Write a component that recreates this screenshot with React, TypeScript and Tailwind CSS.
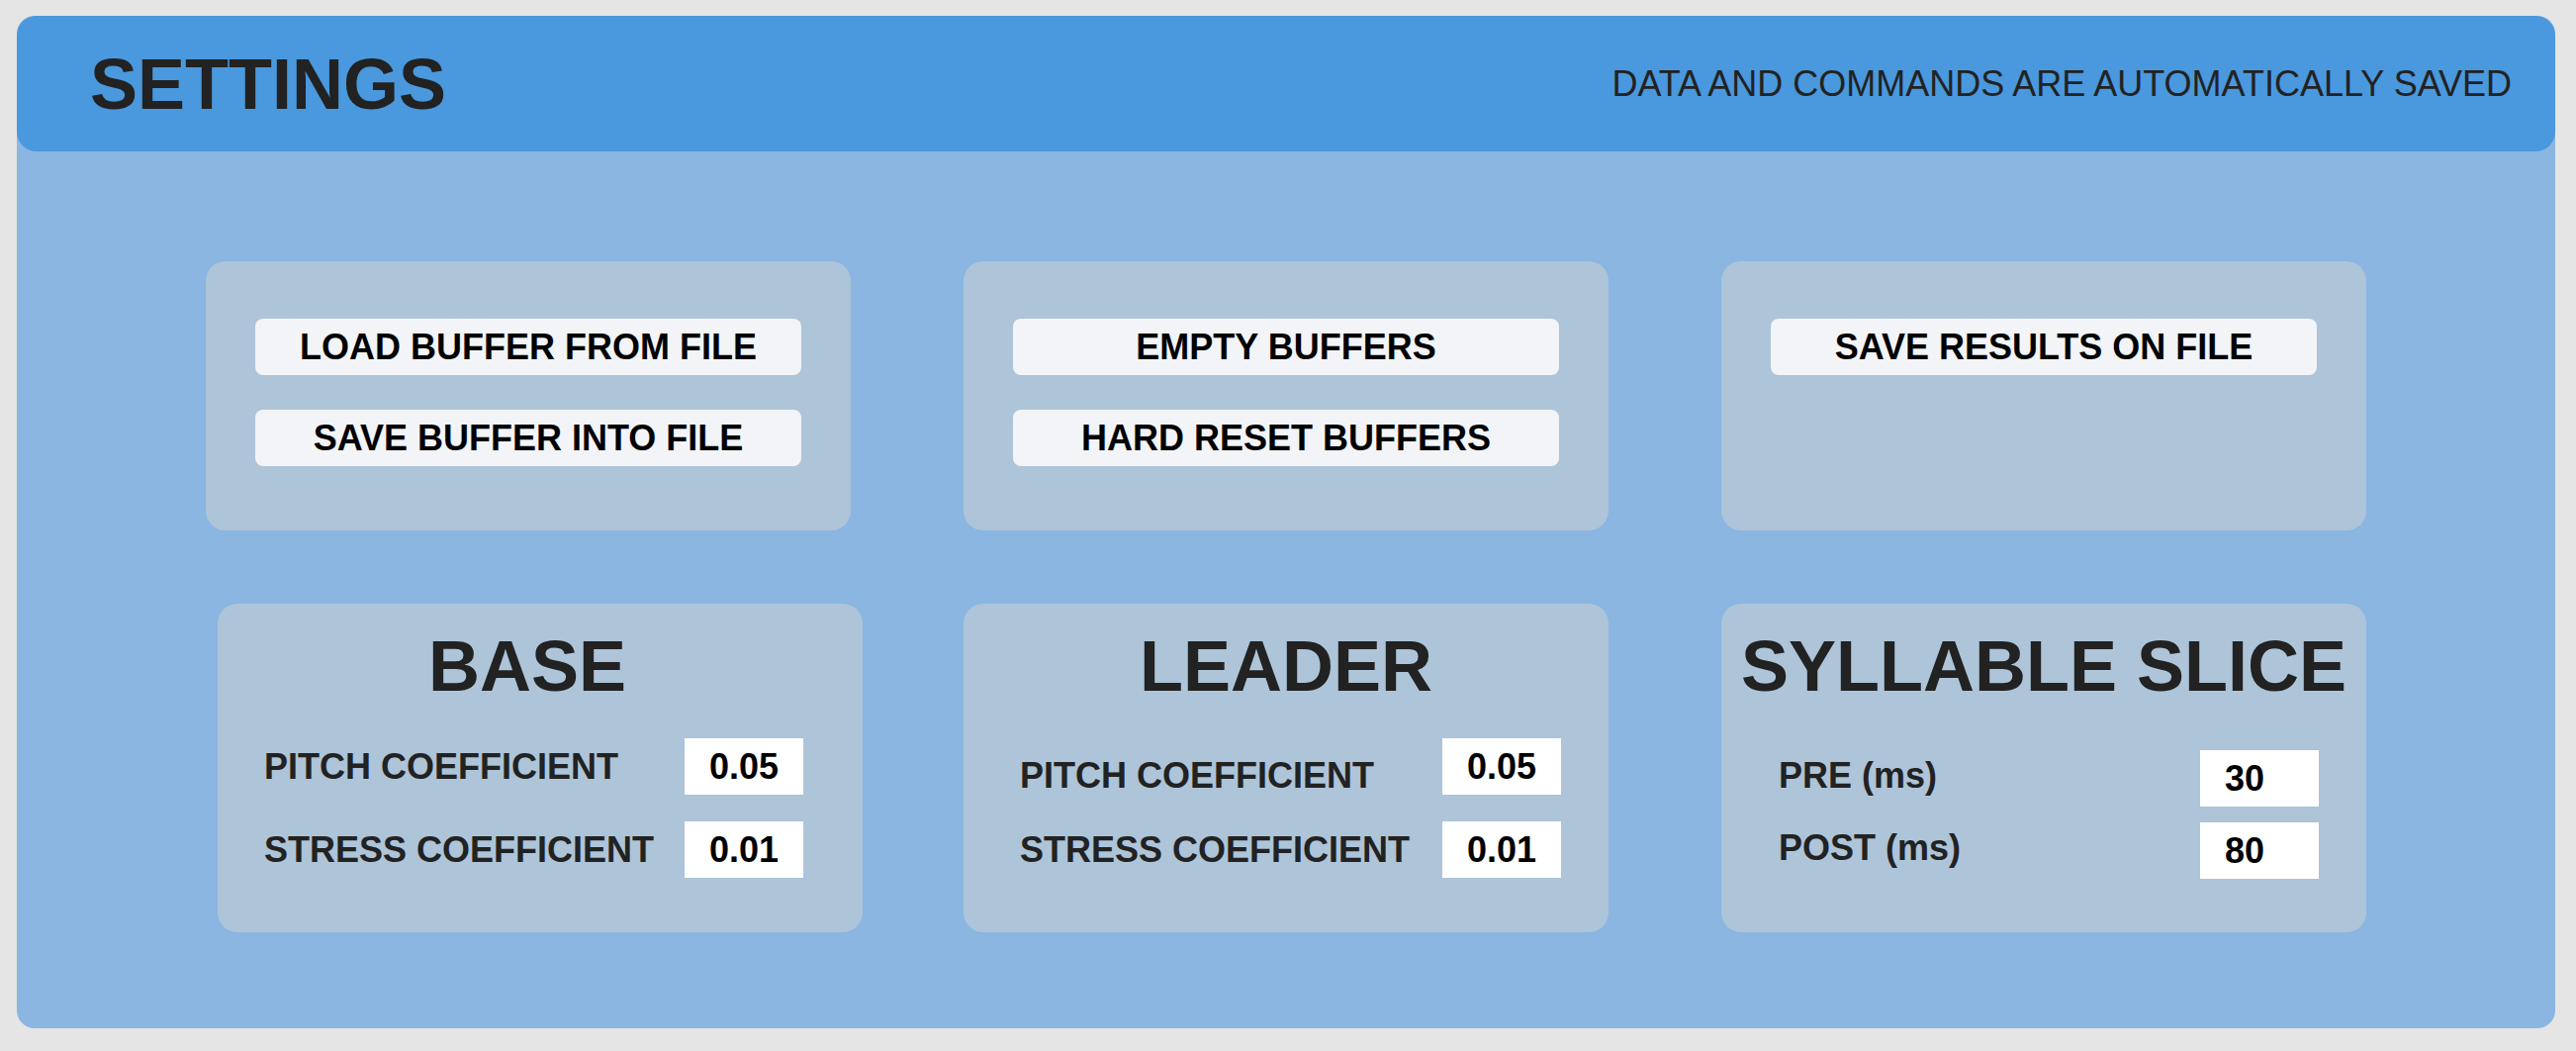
import type { ReactNode } from 'react';

const panel = 'rounded-[20px] bg-[#adc4d9]';
const actionBtn =
  'flex h-[57px] w-full items-center justify-center rounded-lg bg-[#f2f4f7] text-[36px] font-bold leading-none text-black';
const label = 'text-[36px] font-bold leading-none text-[#222]';
const valueInput =
  'h-[57px] w-[120px] bg-white pl-[25px] text-[36px] font-bold text-black outline-none';

function ActionPanel({ children }: { children: ReactNode }) {
  return (
    <div className={`${panel} flex h-[272px] w-[652px] flex-col gap-[35px] px-[50px] pt-[58px]`}>
      {children}
    </div>
  );
}

type Field = { name: string; value: string; labelClass?: string };

function ParamPanel({
  title,
  fields,
  className = '',
  titleClass = '',
  rowsClass,
}: {
  title: string;
  fields: Field[];
  className?: string;
  titleClass?: string;
  rowsClass: string;
}) {
  return (
    <div className={`${panel} flex h-[332px] w-[652px] flex-col pt-[27px] ${className}`}>
      <h2 className={`whitespace-nowrap text-center text-[72px] font-bold leading-none text-[#222] ${titleClass}`}>
        {title}
      </h2>
      <div className={`flex flex-col ${rowsClass}`}>
        {fields.map((f) => (
          <div key={f.name} className="flex items-center justify-between">
            <span className={`${label} ${f.labelClass ?? ''}`}>{f.name}</span>
            <input type="text" defaultValue={f.value} className={valueInput} />
          </div>
        ))}
      </div>
    </div>
  );
}

export default function App() {
  return (
    <div className="min-h-[1062px] bg-[#e5e5e5] pl-[17px] pr-[21px] pt-[16px] font-['Liberation_Sans',Arial,sans-serif]">
      <div className="h-[1023px] rounded-[18px] bg-[#8ab6e1]">
        <header className="flex h-[137px] items-center justify-between rounded-[20px] bg-[#4a98dd] pl-[74px] pr-[44px]">
          <h1 className="text-[72px] font-bold leading-none text-[#222]">SETTINGS</h1>
          <p className="text-[36px] leading-none text-[#222]">DATA AND COMMANDS ARE AUTOMATICALLY SAVED</p>
        </header>

        <div className="mt-[111px] flex gap-[114px] pl-[191px]">
          <ActionPanel>
            <button type="button" className={actionBtn}>LOAD BUFFER FROM FILE</button>
            <button type="button" className={actionBtn}>SAVE BUFFER INTO FILE</button>
          </ActionPanel>
          <ActionPanel>
            <button type="button" className={actionBtn}>EMPTY BUFFERS</button>
            <button type="button" className={actionBtn}>HARD RESET BUFFERS</button>
          </ActionPanel>
          <ActionPanel>
            <button type="button" className={actionBtn}>SAVE RESULTS ON FILE</button>
          </ActionPanel>
        </div>

        <div className="mt-[74px] flex gap-[114px] pl-[191px]">
          <ParamPanel
            title="BASE"
            className="ml-[12px] mr-[-12px]"
            titleClass="mr-[26px]"
            rowsClass="mt-[37px] gap-[27px] pl-[47px] pr-[60px]"
            fields={[
              { name: 'PITCH COEFFICIENT', value: '0.05' },
              { name: 'STRESS COEFFICIENT', value: '0.01' },
            ]}
          />
          <ParamPanel
            title="LEADER"
            rowsClass="mt-[37px] gap-[27px] pl-[57px] pr-[48px]"
            fields={[
              { name: 'PITCH COEFFICIENT', value: '0.05', labelClass: 'mt-[18px]' },
              { name: 'STRESS COEFFICIENT', value: '0.01' },
            ]}
          />
          <ParamPanel
            title="SYLLABLE SLICE"
            rowsClass="mt-[49px] gap-[16px] pl-[58px] pr-[48px]"
            fields={[
              { name: 'PRE (ms)', value: '30', labelClass: 'mb-[6px]' },
              { name: 'POST (ms)', value: '80', labelClass: 'mb-[6px]' },
            ]}
          />
        </div>
      </div>
    </div>
  );
}
